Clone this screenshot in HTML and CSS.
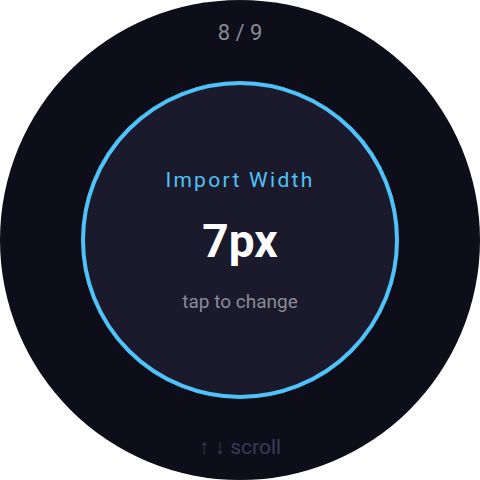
FILE: index.html
```html
<!DOCTYPE html>
<html>
<head>
<meta charset="utf-8">
<link rel="stylesheet" href="styles.css">
</head>
<body>
<div class="watch">
  <div class="page">8 / 9</div>
  <div class="dial">
    <div class="label">Import Width</div>
    <div class="value">7px</div>
    <div class="hint">tap to change</div>
  </div>
  <div class="scroll">↑ ↓ scroll</div>
</div>
</body>
</html>
```
FILE: styles.css
```css
html, body {
  margin: 0;
  padding: 0;
  background: #ffffff;
}
body {
  font-family: Roboto, "Liberation Sans", sans-serif;
}
.watch {
  width: 480px;
  height: 480px;
  border-radius: 50%;
  background: #0d0e19;
  display: flex;
  flex-direction: column;
  align-items: center;
  justify-content: space-between;
  padding: 21px 0;
  box-sizing: border-box;
}
.page {
  color: #8a8a94;
  font-size: 22px;
  line-height: 24px;
}
.dial {
  width: 318px;
  height: 318px;
  box-sizing: border-box;
  border: 4px solid #4fc3f7;
  border-radius: 50%;
  background: #1a1a2c;
  display: flex;
  flex-direction: column;
  align-items: center;
  justify-content: center;
}
.label {
  color: #4fc3f7;
  font-size: 21px;
  letter-spacing: 2.3px;
  line-height: 24px;
}
.value {
  color: #ffffff;
  font-size: 46px;
  font-weight: 700;
  line-height: 50px;
  margin-top: 24px;
}
.hint {
  color: #8a8a94;
  font-size: 19px;
  line-height: 22px;
  margin-top: 25px;
}
.scroll {
  color: #3a3a5c;
  font-size: 21px;
  line-height: 24px;
}
```
